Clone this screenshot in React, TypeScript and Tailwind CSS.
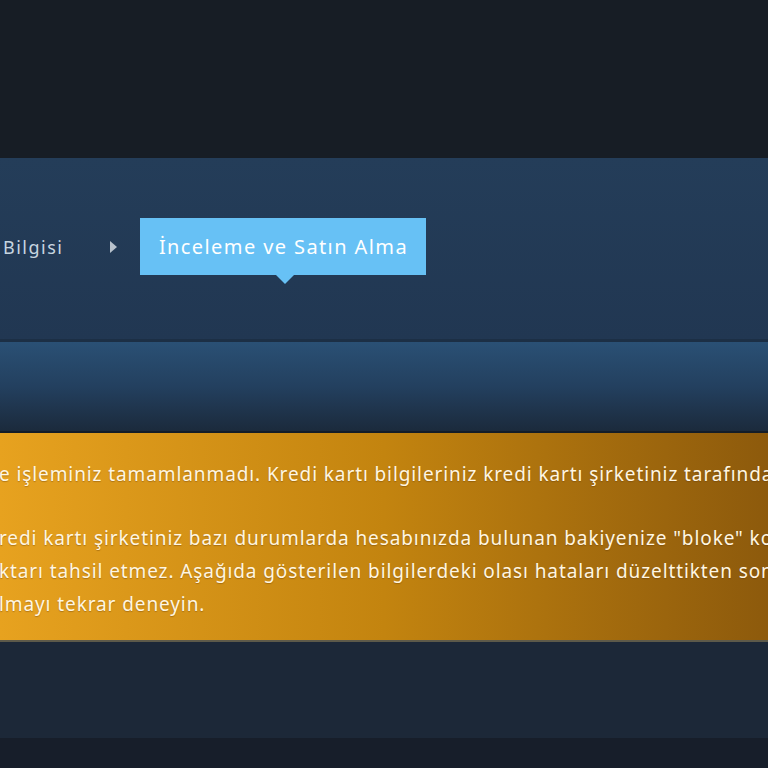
import React from "react";

export default function App() {
  return (
    <div className="w-[768px] h-[768px] overflow-hidden bg-[#171d25] flex flex-col" style={{ fontFamily: '"Noto Sans", "Open Sans", sans-serif' }}>
      <div className="h-[158px] shrink-0 bg-[#171d25]" />
      <div className="h-[181px] shrink-0 bg-gradient-to-b from-[#243d59] to-[#213752] flex items-center">
        <div className="flex items-center ml-[3px] mt-[-4px]">
          <span className="text-[18px] tracking-[1.5px] text-[#c7d5e0] leading-none">Bilgisi</span>
          <span className="ml-[47px] w-0 h-0 border-y-[6px] border-y-transparent border-l-[7px] border-l-[#b8c2cc]" />
          <div className="relative ml-[23px] w-[286px] h-[57px] bg-[#67c1f5] flex items-center justify-center">
            <span className="text-[20px] tracking-[1.4px] text-white leading-none">İnceleme ve Satın Alma</span>
            <span className="absolute left-[136px] top-[57px] w-0 h-0 border-x-[9px] border-x-transparent border-t-[9px] border-t-[#67c1f5]" />
          </div>
        </div>
      </div>
      <div className="h-[3px] shrink-0 bg-[#1c2f45]" />
      <div className="h-[89px] shrink-0 bg-gradient-to-b from-[#2a5075] via-[#23405f] to-[#1b2a3c]" />
      <div className="h-[2px] shrink-0 bg-[#141d28]" />
      <div className="h-[207px] shrink-0 bg-gradient-to-r from-[#e7a21f] via-[#c3840f] to-[#8d5a0c] overflow-hidden whitespace-nowrap text-[19px] tracking-[0.9px] text-[#fff6e2] leading-[33px] pt-[25px] [text-shadow:0_1px_1px_rgba(90,50,0,0.35)]">
        <div className="ml-[-1px]">e işleminiz tamamlanmadı. Kredi kartı bilgileriniz kredi kartı şirketiniz tarafından reddedildi.</div>
        <div className="h-[31px]" />
        <div className="ml-[-1px]">redi kartı şirketiniz bazı durumlarda hesabınızda bulunan bakiyenize "bloke" koyabilir</div>
        <div className="ml-[-1px]">ktarı tahsil etmez. Aşağıda gösterilen bilgilerdeki olası hataları düzelttikten sonra</div>
        <div className="ml-[-1px]">lmayı tekrar deneyin.</div>
      </div>
      <div className="h-[2px] shrink-0 bg-[#5d5a4a]" />
      <div className="h-[96px] shrink-0 bg-[#1c2838]" />
      <div className="flex-1 bg-[#171e2a]" />
    </div>
  );
}
